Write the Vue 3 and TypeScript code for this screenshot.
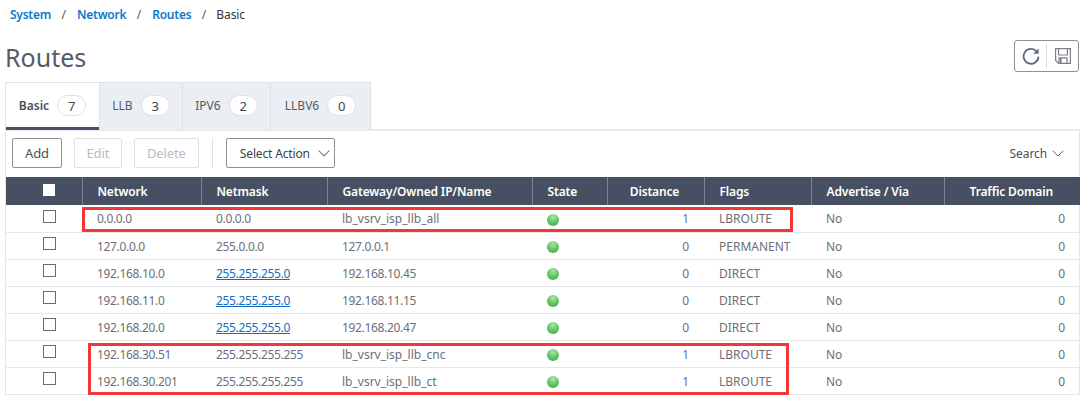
<script setup lang="ts">
interface Row { network: string; netmask: string; link: boolean; gateway: string; distance: number; flags: string }
const tabs = [
  { name: 'Basic', count: 7, active: true },
  { name: 'LLB', count: 3, active: false },
  { name: 'IPV6', count: 2, active: false },
  { name: 'LLBV6', count: 0, active: false },
]
const crumbs = ['System', 'Network', 'Routes']
const columns = [
  { label: 'Network', cls: '' },
  { label: 'Netmask', cls: '' },
  { label: 'Gateway/Owned IP/Name', cls: '' },
  { label: 'State', cls: '' },
  { label: 'Distance', cls: 'center' },
  { label: 'Flags', cls: '' },
  { label: 'Advertise / Via', cls: '' },
  { label: 'Traffic Domain', cls: 'center' },
]
const rows: Row[] = [
  { network: '0.0.0.0', netmask: '0.0.0.0', link: false, gateway: 'lb_vsrv_isp_llb_all', distance: 1, flags: 'LBROUTE' },
  { network: '127.0.0.0', netmask: '255.0.0.0', link: false, gateway: '127.0.0.1', distance: 0, flags: 'PERMANENT' },
  { network: '192.168.10.0', netmask: '255.255.255.0', link: true, gateway: '192.168.10.45', distance: 0, flags: 'DIRECT' },
  { network: '192.168.11.0', netmask: '255.255.255.0', link: true, gateway: '192.168.11.15', distance: 0, flags: 'DIRECT' },
  { network: '192.168.20.0', netmask: '255.255.255.0', link: true, gateway: '192.168.20.47', distance: 0, flags: 'DIRECT' },
  { network: '192.168.30.51', netmask: '255.255.255.255', link: false, gateway: 'lb_vsrv_isp_llb_cnc', distance: 1, flags: 'LBROUTE' },
  { network: '192.168.30.201', netmask: '255.255.255.255', link: false, gateway: 'lb_vsrv_isp_llb_ct', distance: 1, flags: 'LBROUTE' },
]
const isAddress = (v: string) => /^\d/.test(v)
</script>

<template>
  <div class="page">
    <nav class="crumbs">
      <template v-for="c in crumbs" :key="c">
        <a class="crumb">{{ c }}</a><span class="sep">/</span>
      </template>
      <span class="current">Basic</span>
    </nav>

    <header class="title-row">
      <h1>Routes</h1>
      <div class="icon-group">
        <button class="icon-btn" aria-label="Refresh">
          <svg width="18" height="18" viewBox="0 0 18 18" fill="none">
            <path d="M14.7 4.6A7.4 7.4 0 1 0 16.4 9.6" stroke="#5f6b80" stroke-width="1.8" />
            <path d="M16.6 1.6v5.2h-5.2z" fill="#5f6b80" />
          </svg>
        </button>
        <span class="icon-sep"></span>
        <button class="icon-btn" aria-label="Save">
          <svg width="18" height="18" viewBox="0 0 18 18" fill="none" stroke="#7d7f85" stroke-width="1.2">
            <path d="M1.6 1.6h14.8v14.8H4.6l-3-3z" />
            <path d="M4.6 1.6v6.4h8.8V1.6" />
            <path d="M5 16.4v-5.6h8v5.6" />
            <path d="M6.8 11v5" stroke-width="1.6" />
          </svg>
        </button>
      </div>
    </header>

    <div class="tabs">
      <div v-for="t in tabs" :key="t.name" class="tab" :class="{ active: t.active }">
        <span>{{ t.name }}</span><span class="pill">{{ t.count }}</span>
      </div>
    </div>

    <section class="panel">
      <div class="toolbar">
        <button class="btn">Add</button>
        <button class="btn disabled edit">Edit</button>
        <button class="btn disabled del">Delete</button>
        <span class="tool-sep"></span>
        <button class="select">
          Select Action
          <svg width="12" height="7" viewBox="0 0 12 7" fill="none" stroke="#7a7f88" stroke-width="1.1"><path d="M.7.7 6 6l5.3-5.3" /></svg>
        </button>
        <div class="search">
          Search
          <svg width="12" height="7" viewBox="0 0 12 7" fill="none" stroke="#5f6670" stroke-width="1"><path d="M.7.7 6 6l5.3-5.3" /></svg>
        </div>
      </div>

      <table>
        <colgroup>
          <col class="c0" /><col class="c1" /><col class="c2" /><col class="c3" /><col class="c4" />
          <col class="c5" /><col class="c6" /><col class="c7" /><col class="c8" />
        </colgroup>
        <thead>
          <tr>
            <th class="check-cell"><span class="box head-box"></span></th>
            <th v-for="col in columns" :key="col.label" :class="col.cls">{{ col.label }}</th>
          </tr>
        </thead>
        <tbody>
          <tr v-for="r in rows" :key="r.network">
            <td class="check-cell"><span class="box"></span></td>
            <td class="addr">{{ r.network }}</td>
            <td class="addr"><a v-if="r.link" class="mask-link">{{ r.netmask }}</a><template v-else>{{ r.netmask }}</template></td>
            <td :class="{ addr: isAddress(r.gateway) }">{{ r.gateway }}</td>
            <td><span class="dot"></span></td>
            <td class="num">{{ r.distance }}</td>
            <td>{{ r.flags }}</td>
            <td>No</td>
            <td class="num">0</td>
          </tr>
        </tbody>
      </table>
    </section>

    <div class="mark mark-one"></div>
    <div class="mark mark-two"></div>
  </div>
</template>

<style>
html, body { margin: 0; background: #fff; }
</style>

<style scoped>
.page {
  position: relative;
  width: 1088px;
  height: 410px;
  overflow: hidden;
  font-family: "Noto Sans", "Open Sans", sans-serif;
  font-size: 12px;
  color: #6b6f78;
  background: #fff;
  box-sizing: border-box;
  padding: 0 8px 0 5px;
}
.crumbs {
  display: flex;
  align-items: center;
  height: 29px;
  padding: 0 0 1px 5px;
  font-size: 12px;
  color: #333;
  box-sizing: border-box;
}
.crumb { color: #0e78c8; font-weight: 600; letter-spacing: -0.25px; }
.sep { margin: 0 11px 0 10.5px; color: #555; }
.current { color: #333; letter-spacing: -0.1px; margin-left: -1px; }
.title-row {
  display: flex;
  align-items: center;
  justify-content: space-between;
  height: 53px;
}
h1 {
  margin: 2px 0 0;
  font-size: 25px;
  font-weight: 400;
  color: #555b6a;
}
.icon-group {
  display: flex;
  align-items: center;
  width: 65px;
  height: 32px;
  margin: 0 1px 0 0;
  border: 1px solid #8e9096;
  border-radius: 3px;
  box-sizing: border-box;
}
.icon-btn {
  flex: 1;
  display: flex;
  align-items: center;
  justify-content: center;
  padding: 0;
  border: 0;
  background: none;
}
.icon-sep { width: 1px; height: 24px; background: #d8d9dc; }
.tabs {
  display: flex;
  height: 48px;
  width: 366px;
  border-top: 1px solid #e1e3e7;
  border-left: 1px solid #e1e3e7;
  box-sizing: border-box;
}
.tab {
  display: flex;
  align-items: center;
  justify-content: center;
  gap: 8px;
  height: 47px;
  padding-bottom: 2px;
  background: #ebeff3;
  border-right: 1px solid #dcdfe3;
  font-size: 12px;
  color: #555b68;
  box-sizing: border-box;
}
.tab:nth-child(1) { width: 94px; }
.tab:nth-child(2) { width: 83px; }
.tab:nth-child(3) { width: 88px; }
.tab:nth-child(4) { width: 100px; }
.tab.active {
  background: #fff;
  font-weight: 600;
  color: #474f63;
  box-shadow: inset 0 -3px 0 #474f63;
}
.pill {
  display: inline-flex;
  align-items: center;
  justify-content: center;
  width: 29px;
  height: 21px;
  border: 1px solid #dcdfe3;
  border-radius: 11px;
  background: #fff;
  color: #3e4350;
  font-size: 13px;
  font-weight: 400;
  box-sizing: border-box;
}
.panel {
  border-left: 1px solid #e4e6e9;
  border-right: 1px solid #e4e6e9;
  border-top: 2px solid #e8eaed;
  margin-top: -1px;
  width: 1075px;
  box-sizing: border-box;
}
.toolbar {
  display: flex;
  align-items: center;
  height: 46px;
  padding: 0 15px 2px 6px;
  box-sizing: border-box;
}
.btn {
  height: 30px;
  padding: 0 12px;
  margin-right: 12px;
  border: 1px solid #8e9096;
  border-radius: 2px;
  background: #fff;
  font: inherit;
  font-size: 13px;
  letter-spacing: -0.15px;
  color: #4a4f58;
}
.btn.disabled { border-color: #dfe0e2; color: #b9bbc0; }
.edit { width: 48px; padding: 0; }
.del { width: 65px; padding: 0; }
.tool-sep { width: 1px; height: 30px; background: #e1e3e6; margin: 0 13px 0 1px; }
.select {
  display: flex;
  align-items: center;
  gap: 8px;
  height: 30px;
  width: 109px;
  padding: 0 0 0 13px;
  border: 1px solid #8e9096;
  border-radius: 2px;
  background: #fff;
  font: inherit;
  letter-spacing: -0.15px;
  color: #3b3f46;
  box-sizing: border-box;
}
.search {
  margin-left: auto;
  display: flex;
  align-items: center;
  gap: 5px;
  letter-spacing: -0.1px;
  color: #4b5058;
}
table {
  width: 1074px;
  table-layout: fixed;
  border-collapse: collapse;
}
.c0 { width: 76px; } .c1 { width: 119px; } .c2 { width: 126px; } .c3 { width: 205px; }
.c4 { width: 75px; } .c5 { width: 97px; } .c6 { width: 107px; } .c7 { width: 133px; } .c8 { width: 136px; }
th {
  height: 28px;
  padding: 0 0 0 15px;
  background: #474f63;
  color: #fff;
  font-weight: 600;
  font-size: 12px;
  letter-spacing: -0.15px;
  text-align: left;
  border-left: 1px solid #7c8292;
  box-sizing: border-box;
}
th:first-child { border-left: 0; }
th.center { text-align: center; padding: 0 2px 0 0; }
td {
  height: 27px;
  padding: 1px 0 0 15px;
  border-bottom: 1px solid #e6e8ea;
  box-sizing: border-box;
  white-space: nowrap;
}
td.addr { letter-spacing: -0.33px; }
td.num { text-align: right; padding: 1px 15px 0 0; }
.check-cell, td.check-cell, th.check-cell { padding: 0 0 0 10px; text-align: center; }
.box {
  display: block;
  width: 13px;
  height: 13px;
  margin: -4px auto 0;
  border: 1px solid #6a6a6a;
  background: #fff;
  box-sizing: border-box;
}
.head-box { border-color: #fff; width: 12px; height: 12px; margin-top: -3px; }
.dot {
  display: block;
  width: 12px;
  height: 12px;
  margin: 2px 0 0;
  border-radius: 50%;
  background: radial-gradient(circle at 50% 25%, #a6e6a6, #59bf59 60%, #45aa45);
}
.mask-link { color: #0f6fc6; text-decoration: underline; }
.mark {
  position: absolute;
  box-sizing: border-box;
  border: 3px solid #f33636;
  pointer-events: none;
}
.mark-one { left: 82px; top: 207px; width: 711px; height: 25px; }
.mark-two { left: 88px; top: 343px; width: 701px; height: 52px; }
</style>
